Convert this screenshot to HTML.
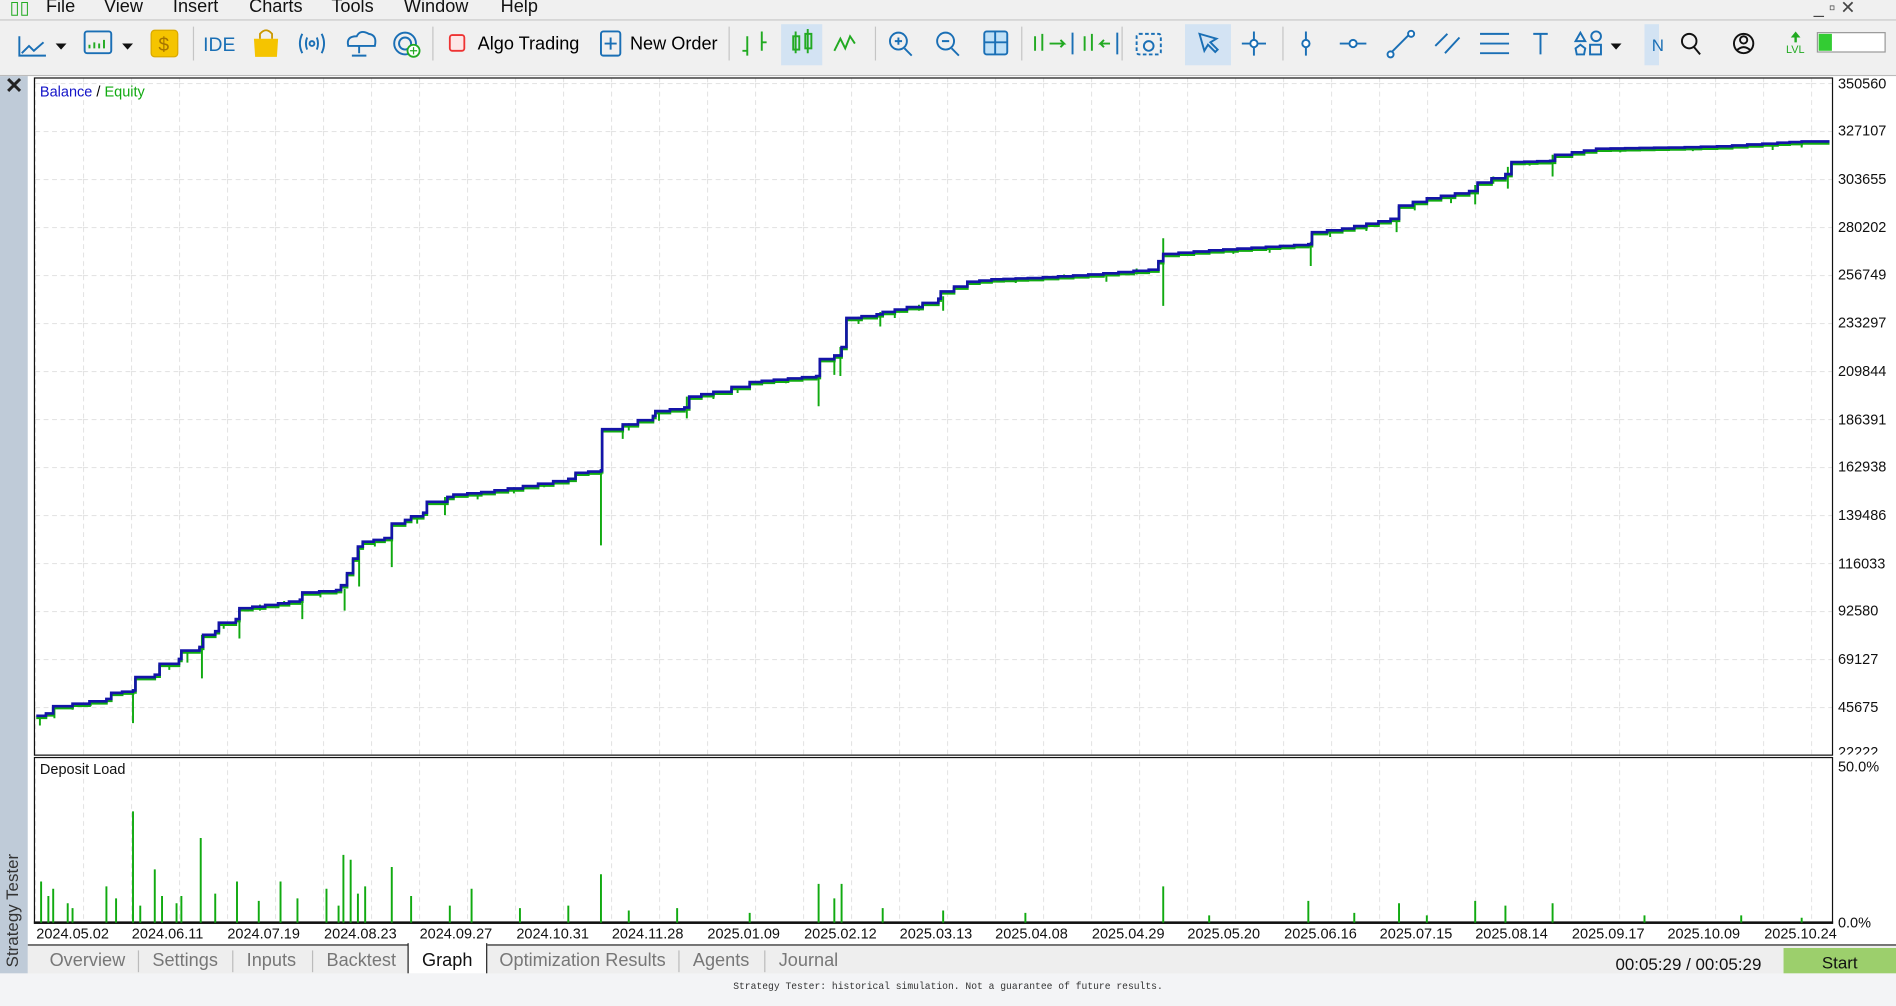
<!DOCTYPE html>
<html><head><meta charset="utf-8"><style>
html,body{margin:0;padding:0;width:1896px;height:1006px;overflow:hidden;background:#f0f0f0}
#w{position:absolute;left:0;top:0;width:1568px;height:832px;transform:scale(1.20918);transform-origin:0 0;font-family:"Liberation Sans",sans-serif;background:#f0f0f0}
.a{position:absolute}
.menu span{position:absolute;top:-3px;font-size:15px;color:#111}
.ylab{position:absolute;left:1520px;font-size:12px;color:#111}
.dl{position:absolute;top:765px;font-size:12px;color:#111}
.tab{position:absolute;top:786px;font-size:15px;color:#777}
</style></head><body><div id="w">
<div class="menu">
<span style="left:8px;color:#2a2">▯▯</span><span style="left:38px">File</span><span style="left:86px">View</span><span style="left:143px">Insert</span><span style="left:206px">Charts</span><span style="left:274px">Tools</span><span style="left:334px">Window</span><span style="left:414px">Help</span>
<span style="left:1500px;color:#444">_ ▫ ✕</span>
</div>
<div class="a" style="left:0;top:16px;width:1568px;height:1px;background:#c8c8c8"></div>
<svg class="a" style="left:0;top:17px" width="1568" height="46" viewBox="0 17 1568 46">
<g fill="none" stroke="#1a6fb5" stroke-width="1.6">
<path d="M18 44 l6-6 4 4 8-7 M16 30 v16 h22"/>
<rect x="70" y="26" width="22" height="18" rx="2"/>
<path d="M74 40 v-3 M78 40 v-5 M82 40 v-4 M86 40 v-7" stroke="#2a2"/>
<path d="M250 28 q-4 8 0 16 M266 28 q4 8 0 16 M254 31 q-2 5 0 10 M262 31 q2 5 0 10"/><circle cx="258" cy="36" r="2"/>
<path d="M288 38 q-2-8 7-8 q3-6 10-2 q7 1 5 10 z M297 38 v6 M291 46 h12"/>
<circle cx="335" cy="36" r="9"/><circle cx="335" cy="36" r="5"/>
<rect x="497" y="26" width="16" height="20" rx="2"/><path d="M505 31 v10 M500 36 h10"/>
<circle cx="743" cy="34" r="7"/><path d="M748 40 l6 6 M740 34 h6 M743 31 v6"/>
<circle cx="782" cy="34" r="7"/><path d="M787 40 l6 6 M779 34 h6"/>
<rect x="814" y="26" width="19" height="19" rx="2" fill="#bfe0f7"/><path d="M823 26 v19 M814 35 h19"/>
<path d="M887 27 v18 M924 27 v18"/>
<rect x="940" y="28" width="20" height="17" rx="2" stroke-dasharray="3 2"/><circle cx="950" cy="38" r="4"/>
<path d="M1037 26 v20 M1027 36 h20"/><circle cx="1037" cy="36" r="3" fill="#fff"/>
<path d="M1080 26 v20"/><circle cx="1080" cy="36" r="3" fill="#fff"/>
<path d="M1108 36 h22"/><circle cx="1119" cy="36" r="3" fill="#fff"/>
<path d="M1150 44 l16-16"/><circle cx="1150" cy="45" r="2.5" fill="#fff"/><circle cx="1167" cy="28" r="2.5" fill="#fff"/>
<path d="M1187 38 l10-10 M1195 44 l12-13"/>
<path d="M1224 28 h24 M1224 36 h24 M1224 44 h24"/>
<path d="M1268 28 h12 M1274 28 v17"/>
<path d="M1303 34 l4-7 4 7z"/><circle cx="1320" cy="30" r="4"/><rect x="1315" y="37" width="9" height="8"/><path d="M1303 40 l4-3 4 3-1 5h-6z"/>
</g>
<g fill="#111"><path d="M46 36 h9 l-4.5 5z M101 36 h9 l-4.5 5z M1332 36 h9 l-4.5 5z"/></g>
<rect x="125" y="25" width="22" height="22" rx="3" fill="#f5c400" stroke="#d9a800"/><text x="131" y="42" font-size="16" fill="#a57400" font-family="Liberation Sans">$</text>
<text x="168" y="42" font-size="16" fill="#1a6fb5" font-family="Liberation Sans">IDE</text>
<path d="M210 32 h20 l-1 15 h-18z" fill="#f5c400"/><path d="M215 32 v-4 q5-6 10 0 v4" fill="none" stroke="#c99700" stroke-width="1.5"/>
<circle cx="342" cy="42" r="5" fill="#fff" stroke="#2a2" stroke-width="1.5"/><path d="M342 39 v6 M339 42 h6" stroke="#2a2"/>
<rect x="372" y="29" width="12" height="13" rx="2" fill="#fde7e7" stroke="#e33" stroke-width="1.5"/>
<text x="395" y="41" font-size="15" font-family="Liberation Sans">Algo Trading</text>
<text x="521" y="41" font-size="15" font-family="Liberation Sans">New Order</text>
<g stroke="#2a2" stroke-width="1.6" fill="none"><path d="M618 30 v16 M614 42 h4 M630 26 v16 M630 35 h4 M690 42 l5-10 4 8 4-10 4 6"/></g>
<rect x="646" y="20" width="34" height="34" fill="#d3e3f3"/>
<g stroke="#2a2" stroke-width="1.6" fill="none"><rect x="656" y="30" width="5" height="11"/><rect x="666" y="28" width="5" height="12"/><path d="M658 26 v18 M668 24 v20"/>
<path d="M856 30 v12 M862 28 v14 M868 36 h12 l-3-3 M880 36 l-3 3 M897 30 v12 M903 28 v14 M918 36 h-8 l3-3 M910 36 l3 3"/></g>
<rect x="980" y="20" width="38" height="34" fill="#d3e3f3"/>
<path d="M992 28 l4 14 3-5 6 6 2-2-6-6 5-3z" fill="none" stroke="#1a6fb5" stroke-width="1.6"/>
<rect x="1360" y="20" width="12" height="34" fill="#d3e3f3"/><text x="1366" y="42" font-size="14" fill="#1a6fb5">N</text>
<g fill="none" stroke="#111" stroke-width="1.6"><circle cx="1397" cy="34" r="6"/><path d="M1401 39 l5 6"/><circle cx="1442" cy="36" r="8"/><circle cx="1442" cy="33" r="3"/><path d="M1436 42 q6-6 12 0"/></g>
<path d="M1485 26 l-4 5h3v4h2v-4h3z" fill="#2a2"/><text x="1477" y="44" font-size="9" fill="#2a2">LVL</text>
<rect x="1503" y="27" width="56" height="16" fill="#fff" stroke="#999"/><rect x="1504" y="28" width="11" height="14" fill="#3c3"/>
<g stroke="#c5c5c5"><path d="M160 22 v28 M358 22 v28 M603 22 v28 M724 22 v28 M845 22 v28 M928 22 v28 M1061 22 v28"/></g>
</svg>
<div class="a" style="left:0;top:62px;width:1568px;height:1px;background:#bbb"></div>
<div class="a" style="left:0;top:63px;width:23px;height:742px;background:#bfcbd8"></div>
<div class="a" style="left:4px;top:61px;font-size:18px;font-weight:bold;color:#222">✕</div>
<div class="a" style="left:-40px;top:742px;transform:rotate(-90deg);font-size:14px;color:#333;width:100px;white-space:nowrap">Strategy Tester</div>
<div class="a" style="left:23px;top:63px;width:1545px;height:719px;background:#fff"></div>
<svg class="a" style="left:0;top:0" width="1568" height="832">
<defs><pattern id="g" x="68.8" y="68.8" width="39.7" height="39.7" patternUnits="userSpaceOnUse"><path d="M0 0 v39.7 M0 0 h39.7" stroke="#cfcfcf" stroke-dasharray="4 3" fill="none"/></pattern>
<pattern id="g2" x="68.8" y="0" width="39.7" height="900" patternUnits="userSpaceOnUse"><path d="M0 0 v900" stroke="#cfcfcf" stroke-dasharray="4 3"/></pattern></defs>
<rect x="29" y="65" width="1486" height="559" fill="url(#g)"/>
<rect x="29" y="628" width="1486" height="135" fill="url(#g2)"/>
<rect x="28.5" y="64.5" width="1487" height="560" fill="none" stroke="#111"/>
<rect x="28.5" y="626.5" width="1487" height="137" fill="none" stroke="#111"/>
<path d="M28 763 h1488" stroke="#111" stroke-width="2"/>
<g stroke="#1a1" stroke-width="1.6">
<path d="M33 592 v8 M45 584 v10 M110 570 v28 M167 525 v36 M198 503 v25 M250 490 v22 M285 487 v18 M297 455 v30 M324 433 v36 M368 411 v15 M497 389 v62 M515 353 v10 M568 328 v18 M677 311 v25 M690 294 v16 M695 287 v24 M728 258 v12 M780 245 v12 M915 225 v8 M962 205 v48 M962 205 v-8 M1084 200 v20 M1155 180 v12 M1220 153 v16 M1247 138 v18 M1284 128 v18 M1466 118 v6 M1490 117 v5
M60 582 v5 M75 580 v4 M140 548 v6 M155 540 v8 M185 514 v6 M215 500 v5 M235 497 v4 M265 489 v5 M310 446 v6 M345 427 v6 M395 408 v5 M425 403 v5 M450 399 v4 M520 350 v6 M545 342 v6 M590 325 v5 M610 320 v5 M650 313 v4 M710 262 v6 M740 257 v6 M760 252 v5 M800 233 v5 M840 230 v4 M880 227 v4 M940 222 v5 M1020 206 v4 M1050 204 v5 M1100 190 v6 M1130 186 v5 M1170 168 v6 M1200 162 v6 M1235 146 v6 M1265 133 v4 M1300 126 v4 M1340 123 v3 M1400 122 v3"/>
</g>
<path id="eq" fill="none" stroke="#1a1" stroke-width="2.2"/>
<path id="bal" fill="none" stroke="#1414a8" stroke-width="2.2"/>
<g stroke="#1a1" stroke-width="1.6">
<path d="M34 763 v-34 M40 763 v-22 M44 763 v-28 M56 763 v-16 M60 763 v-12 M88 763 v-30 M96 763 v-20 M110 763 v-92 M116 763 v-14 M128 763 v-44 M134 763 v-22 M146 763 v-16 M150 763 v-22 M166 763 v-70 M178 763 v-24 M196 763 v-34 M214 763 v-18 M232 763 v-34 M246 763 v-20 M270 763 v-28 M280 763 v-14 M284 763 v-56 M290 763 v-52 M296 763 v-24 M302 763 v-30 M324 763 v-46 M340 763 v-22 M372 763 v-14 M390 763 v-28 M430 763 v-12 M470 763 v-14 M497 763 v-40 M520 763 v-10 M560 763 v-12 M620 763 v-8 M677 763 v-32 M690 763 v-20 M696 763 v-32 M730 763 v-12 M780 763 v-10 M848 763 v-8 M962 763 v-30 M1000 763 v-6 M1082 763 v-18 M1120 763 v-8 M1157 763 v-16 M1180 763 v-6 M1220 763 v-18 M1245 763 v-14 M1284 763 v-16 M1360 763 v-6 M1440 763 v-6 M1490 763 v-4"/>
</g>
</svg>
<script>
(function(){var p=[30,592,38,590,44,584,60,582,88,578,92,573,110,571,112,560,128,558,132,549,148,545,150,538,165,535,168,525,178,522,181,515,195,512,198,503,230,499,248,496,250,490,278,488,282,484,287,474,292,462,296,452,300,448,318,445,324,433,335,430,340,427,350,424,353,415,370,411,375,409,398,407,420,404,470,396,476,391,497,389,498,355,515,351,540,344,542,340,566,337,570,328,590,324,605,320,620,316,640,314,675,311,678,297,690,294,696,287,700,263,725,260,730,258,750,254,776,247,778,241,800,233,820,231,850,230,900,227,950,223,958,216,962,210,1000,207,1082,202,1085,192,1110,189,1130,185,1150,181,1157,170,1180,164,1215,158,1222,151,1245,144,1250,134,1282,133,1286,128,1300,126,1320,123,1380,122,1420,121,1470,118,1490,117,1513,117];
function mk(o){var d="M"+p[0]+" "+(p[1]+o);for(var i=2;i<p.length;i+=2){var x0=p[i-2],y0=p[i-1],x1=p[i],y1=p[i+1];var n=Math.max(1,Math.round((x1-x0)/12));for(var k=1;k<=n;k++){var x=x0+(x1-x0)*k/n,y=y0+(y1-y0)*k/n;d+=" H"+x.toFixed(1)+" V"+(y+o).toFixed(1);}}return d;}
document.getElementById("eq").setAttribute("d",mk(1.6));document.getElementById("bal").setAttribute("d",mk(0));})();
</script>
<div class="a" style="left:33px;top:69px;font-size:12px"><span style="color:#1414c8">Balance</span> / <span style="color:#1a1">Equity</span></div>
<div class="a" style="left:33px;top:629px;font-size:12px;color:#111">Deposit Load</div>
<div class="ylab" style="top:62px">350560</div><div class="ylab" style="top:101px">327107</div><div class="ylab" style="top:141px">303655</div><div class="ylab" style="top:181px">280202</div><div class="ylab" style="top:220px">256749</div><div class="ylab" style="top:260px">233297</div><div class="ylab" style="top:300px">209844</div><div class="ylab" style="top:340px">186391</div><div class="ylab" style="top:379px">162938</div><div class="ylab" style="top:419px">139486</div><div class="ylab" style="top:459px">116033</div><div class="ylab" style="top:498px">92580</div><div class="ylab" style="top:538px">69127</div><div class="ylab" style="top:578px">45675</div><div class="ylab" style="top:615px;height:9px;overflow:hidden">22222</div>
<div class="ylab" style="top:627px">50.0%</div><div class="ylab" style="top:756px">0.0%</div>
<div class="dl" style="left:30px">2024.05.02</div><div class="dl" style="left:109px">2024.06.11</div><div class="dl" style="left:188px">2024.07.19</div><div class="dl" style="left:268px">2024.08.23</div><div class="dl" style="left:347px">2024.09.27</div><div class="dl" style="left:427px">2024.10.31</div><div class="dl" style="left:506px">2024.11.28</div><div class="dl" style="left:585px">2025.01.09</div><div class="dl" style="left:665px">2025.02.12</div><div class="dl" style="left:744px">2025.03.13</div><div class="dl" style="left:823px">2025.04.08</div><div class="dl" style="left:903px">2025.04.29</div><div class="dl" style="left:982px">2025.05.20</div><div class="dl" style="left:1062px">2025.06.16</div><div class="dl" style="left:1141px">2025.07.15</div><div class="dl" style="left:1220px">2025.08.14</div><div class="dl" style="left:1300px">2025.09.17</div><div class="dl" style="left:1379px">2025.10.09</div><div class="dl" style="left:1459px">2025.10.24</div>
<div class="a" style="left:23px;top:782px;width:1545px;height:23px;background:#eee"></div>
<div class="a" style="left:23px;top:781px;width:1545px;height:1px;background:#222"></div>
<div class="a" style="left:337px;top:780px;width:64px;height:25px;background:#fff;border-left:1px solid #222;border-right:1px solid #222"></div>
<div class="tab" style="left:41px">Overview</div><div class="tab" style="left:126px">Settings</div><div class="tab" style="left:204px">Inputs</div><div class="tab" style="left:270px">Backtest</div><div class="tab" style="left:349px;color:#111">Graph</div><div class="tab" style="left:413px">Optimization Results</div><div class="tab" style="left:573px">Agents</div><div class="tab" style="left:644px">Journal</div>
<div class="a" style="left:114px;top:786px;width:1px;height:18px;background:#bbb"></div><div class="a" style="left:192px;top:786px;width:1px;height:18px;background:#bbb"></div><div class="a" style="left:258px;top:786px;width:1px;height:18px;background:#bbb"></div><div class="a" style="left:561px;top:786px;width:1px;height:18px;background:#bbb"></div><div class="a" style="left:632px;top:786px;width:1px;height:18px;background:#bbb"></div>
<div class="a" style="left:1336px;top:789px;font-size:14px;color:#111">00:05:29 / 00:05:29</div>
<div class="a" style="left:1475px;top:784px;width:93px;height:21px;background:#9ccf6c;font-size:14px;text-align:center;line-height:24px;color:#111">Start</div>
<div class="a" style="left:0;top:805px;width:1568px;height:27px;background:#f3f4f6"></div>
<div class="a" style="left:0;top:812px;width:1568px;text-align:center;font-family:'Liberation Mono',monospace;font-size:8px;color:#333">Strategy Tester: historical simulation. Not a guarantee of future results.</div>
</div></body></html>
